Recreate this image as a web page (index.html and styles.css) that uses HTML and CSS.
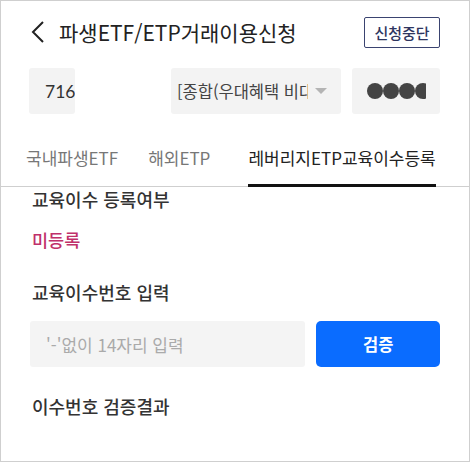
FILE: index.html
```html
<!DOCTYPE html>
<html lang="ko">
<head>
<meta charset="utf-8">
<link rel="stylesheet" href="styles.css">
</head>
<body>
<div class="frame">
  <header class="header">
    <svg class="back" width="14" height="22" viewBox="0 0 14 22"><path d="M12 1 L2 11 L12 21" fill="none" stroke="#222" stroke-width="2"/></svg>
    <h1 class="title">파생ETF/ETP거래이용신청</h1>
    <button class="stop-btn">신청중단</button>
  </header>
  <div class="account-row">
    <div class="box acct"><span class="acct-num">716</span></div>
    <div class="box select"><span class="select-text">[종합(우대혜택 비대면)]</span><span class="caret"></span></div>
    <div class="box pw"><div class="dots"><i></i><i></i><i></i><i></i><i></i></div></div>
  </div>
  <nav class="tabs">
    <span class="tab">국내파생ETF</span>
    <span class="tab">해외ETP</span>
    <span class="tab active">레버리지ETP교육이수등록</span>
  </nav>
  <section class="content">
    <h2 class="label">교육이수 등록여부</h2>
    <p class="status">미등록</p>
    <h2 class="label label-input">교육이수번호 입력</h2>
    <div class="input-row">
      <div class="field">'-'없이 14자리 입력</div>
      <button class="verify">검증</button>
    </div>
    <h2 class="label label-result">이수번호 검증결과</h2>
  </section>
</div>
</body>
</html>
```
FILE: styles.css
```css
* { box-sizing: border-box; }
html, body { margin: 0; padding: 0; background: #fff; }
body { font-family: "Noto Sans CJK KR", "Noto Sans", sans-serif; color: #333; }
.frame {
  width: 470px; height: 462px;
  border: 1px solid #cfcfcf;
  overflow: hidden;
}
.header {
  display: flex; align-items: center;
  height: 62px;
  padding: 0 29px 0 30px;
}
.back { display: block; margin-right: 14px; }
.title {
  margin: 0; flex: 1;
  font-size: 21px; font-weight: 400; color: #222;
  line-height: 28px;
}
.stop-btn {
  font-family: inherit;
  width: 76px; height: 31px;
  border: 1px solid #3a4370; border-radius: 2px;
  background: #fff; color: #2e3560;
  font-size: 15px; font-weight: 500; padding: 0;
  line-height: 29px;
}
.account-row {
  display: flex;
  height: 46px;
  margin-top: 5px;
  padding-left: 28px;
}
.box { background: #f3f3f3; border-radius: 3px; height: 46px; display: flex; align-items: center; overflow: hidden; }
.acct { width: 46px; padding-left: 16px; }
.acct-num { font-family: Lato, sans-serif; font-size: 17.5px; color: #333; white-space: nowrap; }
.select { width: 170px; margin-left: 96px; padding-left: 6px; }
.select-text { font-size: 16.5px; color: #444; white-space: nowrap; width: 131px; overflow: hidden; display: block; }
.caret {
  margin-left: 7px;
  width: 0; height: 0;
  border-left: 6px solid transparent; border-right: 6px solid transparent;
  border-top: 6px solid #b4b4b4;
  flex: none;
}
.pw { width: 88px; margin-left: 11px; padding-left: 15px; }
.dots { display: flex; gap: 0; width: 59px; overflow: hidden; flex: none; }
.dots i { display: block; width: 16px; height: 16px; border-radius: 50%; background: #444; flex: none; }
.tabs {
  display: flex; align-items: flex-end;
  height: 57px;
  margin-top: 16px;
  padding-left: 25px;
  border-bottom: 1px solid #cfcfcf;
}
.tab {
  font-size: 17px; color: #777;
  height: 57px; line-height: 26px;
  padding-top: 15px;
  margin-right: 30px;
  border-bottom: 3px solid transparent;
  margin-bottom: -1px;
  white-space: nowrap;
}
.tab.active { color: #222; border-bottom-color: #111; margin-left: 8px; margin-right: 0; }
.content { padding: 0 29px 0 31px; }
.label { margin: 0; font-size: 18px; font-weight: 500; line-height: 24px; color: #333; }
.status { margin: 17px 0 0; font-size: 17.5px; line-height: 24px; color: #c0306a; font-weight: 500; }
.label-input { margin-top: 28px; }
.input-row { display: flex; margin-top: 17px; margin-left: -2px; }
.field {
  width: 276px; height: 46px;
  background: #f4f4f4; border-radius: 3px;
  display: flex; align-items: center;
  padding-left: 16px;
  font-size: 17px; color: #aaa;
}
.verify {
  font-family: inherit;
  margin-left: 11px;
  width: 124px; height: 46px;
  border: none; border-radius: 5px;
  background: #0a6cff; color: #fff;
  font-size: 16.5px; font-weight: 700;
}
.label-result { margin-top: 27px; }
```
